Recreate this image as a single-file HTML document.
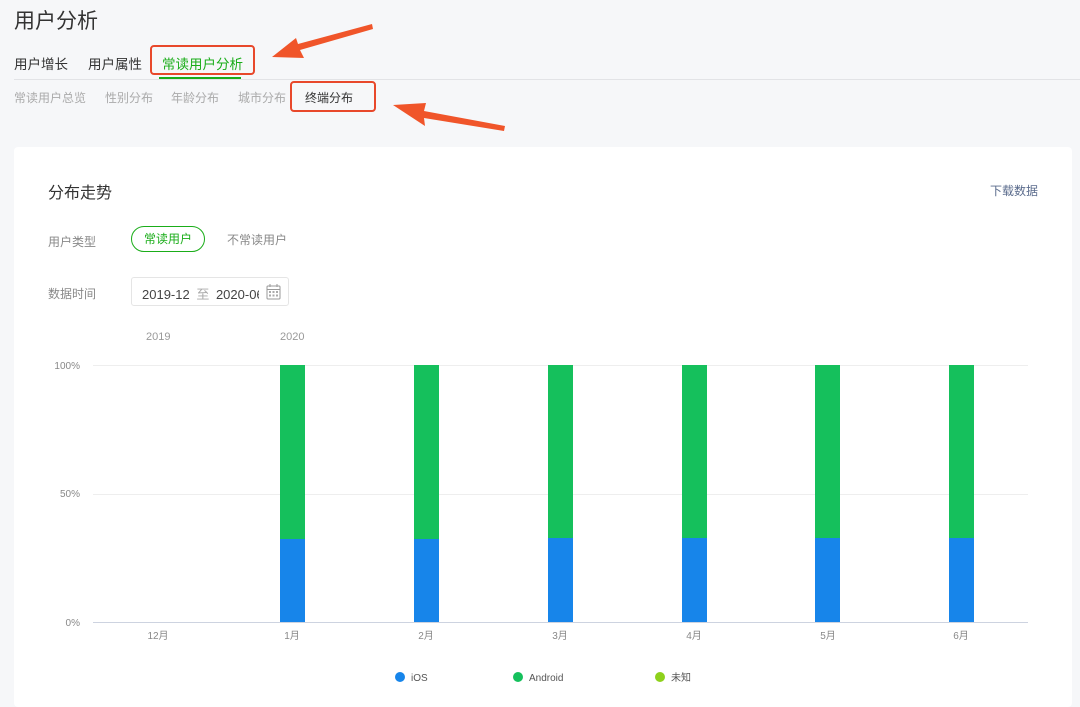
<!DOCTYPE html>
<html><head><meta charset="utf-8"><style>
body{margin:0;width:1080px;height:692px;background:#f6f7f9;font-family:"Liberation Sans","Noto Sans CJK SC",sans-serif;position:relative;overflow:hidden}
.a{position:absolute;white-space:nowrap}
</style></head><body>
<div class="a" style="left:14px;top:5px;font-size:21px;color:#333">用户分析</div>
<div class="a" style="left:14px;top:53px;font-size:13.5px;color:#333">用户增长</div>
<div class="a" style="left:88px;top:53px;font-size:13.5px;color:#333">用户属性</div>
<div class="a" style="left:162px;top:53px;font-size:13.5px;color:#1aad19">常读用户分析</div>
<div class="a" style="left:159px;top:77px;width:82px;height:2px;background:#1aad19"></div>
<div class="a" style="left:14px;top:79px;width:1066px;height:1px;background:#e2e3e6"></div>
<div class="a" style="left:150px;top:45px;width:105px;height:30px;border:2px solid #e8482b;border-radius:4px;box-sizing:border-box"></div>
<div class="a" style="left:14px;top:89px;font-size:12px;color:#aaa">常读用户总览</div>
<div class="a" style="left:105px;top:89px;font-size:12px;color:#aaa">性别分布</div>
<div class="a" style="left:171px;top:89px;font-size:12px;color:#aaa">年龄分布</div>
<div class="a" style="left:238px;top:89px;font-size:12px;color:#aaa">城市分布</div>
<div class="a" style="left:305px;top:89px;font-size:12px;color:#333">终端分布</div>
<div class="a" style="left:290px;top:81px;width:86px;height:31px;border:2px solid #e8482b;border-radius:4px;box-sizing:border-box"></div>
<svg class="a" style="left:0;top:0" width="1080" height="140">
<polygon points="372,24 373,29 300,50 304,58 272,57 296,38 298,44" fill="#f0552a"/>
<polygon points="505,126 504,131 424,118 425,126 393,105 426,103 424,111" fill="#f0552a"/>
</svg>
<div class="a" style="left:14px;top:147px;width:1058px;height:560px;background:#fff;border-radius:4px"></div>
<div class="a" style="left:48px;top:179px;font-size:16px;color:#333">分布走势</div>
<div class="a" style="left:990px;top:182px;font-size:12px;color:#5a6b8c">下载数据</div>
<div class="a" style="left:48px;top:233px;font-size:12px;color:#888">用户类型</div>
<div class="a" style="left:131px;top:226px;width:72px;height:24px;border:1px solid #1aad19;border-radius:13px;font-size:12px;color:#1aad19;text-align:center;line-height:24px">常读用户</div>
<div class="a" style="left:227px;top:231px;font-size:12px;color:#888">不常读用户</div>
<div class="a" style="left:48px;top:285px;font-size:12px;color:#888">数据时间</div>
<div class="a" style="left:131px;top:277px;width:158px;height:29px;border:1px solid #e5e5e5;border-radius:3px;box-sizing:border-box"></div>
<div class="a" style="left:142px;top:284px;width:117px;overflow:hidden;font-size:13px;color:#444">2019-12 <span style="color:#aaa;margin:0 3px">至</span> 2020-06</div>
<svg class="a" style="left:266px;top:284px" width="15" height="16"><rect x="1" y="2" width="13" height="13" rx="1" fill="none" stroke="#999"/><line x1="1" y1="5.5" x2="14" y2="5.5" stroke="#999"/><line x1="4" y1="0" x2="4" y2="3" stroke="#999"/><line x1="11" y1="0" x2="11" y2="3" stroke="#999"/><g fill="#aaa"><rect x="3" y="7" width="2" height="2"/><rect x="6.5" y="7" width="2" height="2"/><rect x="10" y="7" width="2" height="2"/><rect x="3" y="10.5" width="2" height="2"/><rect x="6.5" y="10.5" width="2" height="2"/><rect x="10" y="10.5" width="2" height="2"/></g></svg>
<div class="a" style="left:146px;top:331px;font-size:11px;color:#999">2019</div>
<div class="a" style="left:280px;top:331px;font-size:11px;color:#999">2020</div>
<svg class="a" style="left:0;top:0" width="1080" height="692" font-family="Liberation Sans,Noto Sans CJK SC,sans-serif" font-size="10" fill="#888">
<line x1="93" y1="365.5" x2="1028" y2="365.5" stroke="#eee"/>
<line x1="93" y1="494.5" x2="1028" y2="494.5" stroke="#eee"/>
<line x1="93" y1="622.5" x2="1028" y2="622.5" stroke="#cdd3e0"/>
<text x="80" y="369" text-anchor="end">100%</text>
<text x="80" y="497" text-anchor="end">50%</text>
<text x="80" y="626" text-anchor="end">0%</text>
<g fill="#15c05c">
<rect x="280" y="365" width="25" height="174"/><rect x="414" y="365" width="25" height="174"/><rect x="548" y="365" width="25" height="173"/><rect x="682" y="365" width="25" height="173"/><rect x="815" y="365" width="25" height="173"/><rect x="949" y="365" width="25" height="173"/>
</g>
<g fill="#1785ea">
<rect x="280" y="539" width="25" height="83"/><rect x="414" y="539" width="25" height="83"/><rect x="548" y="538" width="25" height="84"/><rect x="682" y="538" width="25" height="84"/><rect x="815" y="538" width="25" height="84"/><rect x="949" y="538" width="25" height="84"/>
</g>
<g text-anchor="middle"><text x="158" y="639">12月</text><text x="292" y="639">1月</text><text x="426" y="639">2月</text><text x="560" y="639">3月</text><text x="694" y="639">4月</text><text x="828" y="639">5月</text><text x="961" y="639">6月</text></g>
<circle cx="400" cy="677" r="5" fill="#1785ea"/><text x="411" y="681" fill="#555">iOS</text>
<circle cx="518" cy="677" r="5" fill="#15c05c"/><text x="529" y="681" fill="#555">Android</text>
<circle cx="660" cy="677" r="5" fill="#8ed11c"/><text x="671" y="681" fill="#555">未知</text>
</svg>
</body></html>
